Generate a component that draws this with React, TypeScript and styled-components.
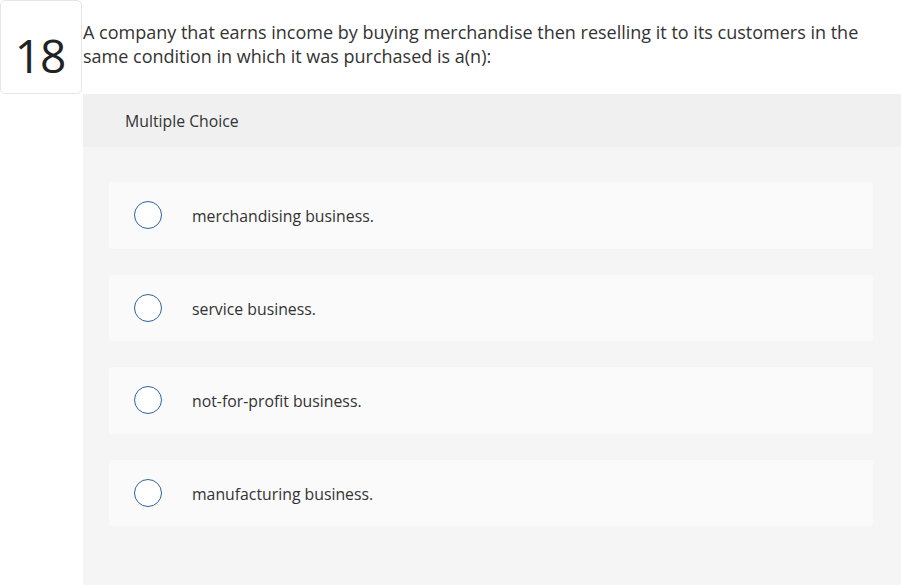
import React from "react";
import styled, { createGlobalStyle } from "styled-components";

const Global = createGlobalStyle`
  html, body { margin: 0; padding: 0; background: #fff; }
  body { font-family: "Open Sans", Lato, sans-serif; color: #333; font-variant-ligatures: none; }
`;

const Page = styled.div`
  display: grid;
  grid-template-columns: 82px 1fr;
  column-gap: 1px;
  width: 901px;
  min-height: 585px;
`;

const NumberBox = styled.div`
  box-sizing: border-box;
  height: 94px;
  border: 1px solid #e6e6e6;
  border-radius: 5px;
  display: flex;
  align-items: center;
  justify-content: center;
  padding-top: 16px;
  padding-right: 2px;
  font-size: 46px;
  color: #222;
  letter-spacing: -1px;
`;

const Main = styled.div`
  display: flex;
  flex-direction: column;
`;

const Question = styled.div`
  box-sizing: border-box;
  height: 94px;
  padding: 20px 30px 0 0;
  font-size: 18px;
  line-height: 24px;
  color: #333;
`;

const Panel = styled.div`
  flex: 1;
  background: #f5f5f5;
  display: flex;
  flex-direction: column;
  min-height: 491px;
`;

const PanelHeader = styled.div`
  height: 53px;
  background: #f0f0f0;
  display: flex;
  align-items: center;
  padding-left: 42px;
  font-size: 15.8px;
  color: #333;
`;

const Options = styled.div`
  display: flex;
  flex-direction: column;
  gap: 26px;
  padding: 35px 28px 0 26px;
`;

const Option = styled.div`
  height: 66.5px;
  background: #fafafa;
  border-radius: 3px;
  display: flex;
  align-items: center;
  padding-left: 25px;
`;

const Radio = styled.span`
  box-sizing: border-box;
  width: 28px;
  height: 28px;
  border-radius: 50%;
  border: 1.5px solid #2e6399;
  background: #fff;
  flex: none;
`;

const Label = styled.span`
  margin-left: 30px;
  padding-top: 2px;
  font-size: 15.8px;
  color: #333;
`;

const choices = [
  "merchandising business.",
  "service business.",
  "not-for-profit business.",
  "manufacturing business.",
];

export default function App() {
  return (
    <>
      <Global />
      <Page>
        <NumberBox>18</NumberBox>
        <Main>
          <Question>
            A company that earns income by buying merchandise then reselling it to its customers in the
            same condition in which it was purchased is a(n):
          </Question>
          <Panel>
            <PanelHeader>Multiple Choice</PanelHeader>
            <Options>
              {choices.map((c) => (
                <Option key={c}>
                  <Radio />
                  <Label>{c}</Label>
                </Option>
              ))}
            </Options>
          </Panel>
        </Main>
      </Page>
    </>
  );
}
